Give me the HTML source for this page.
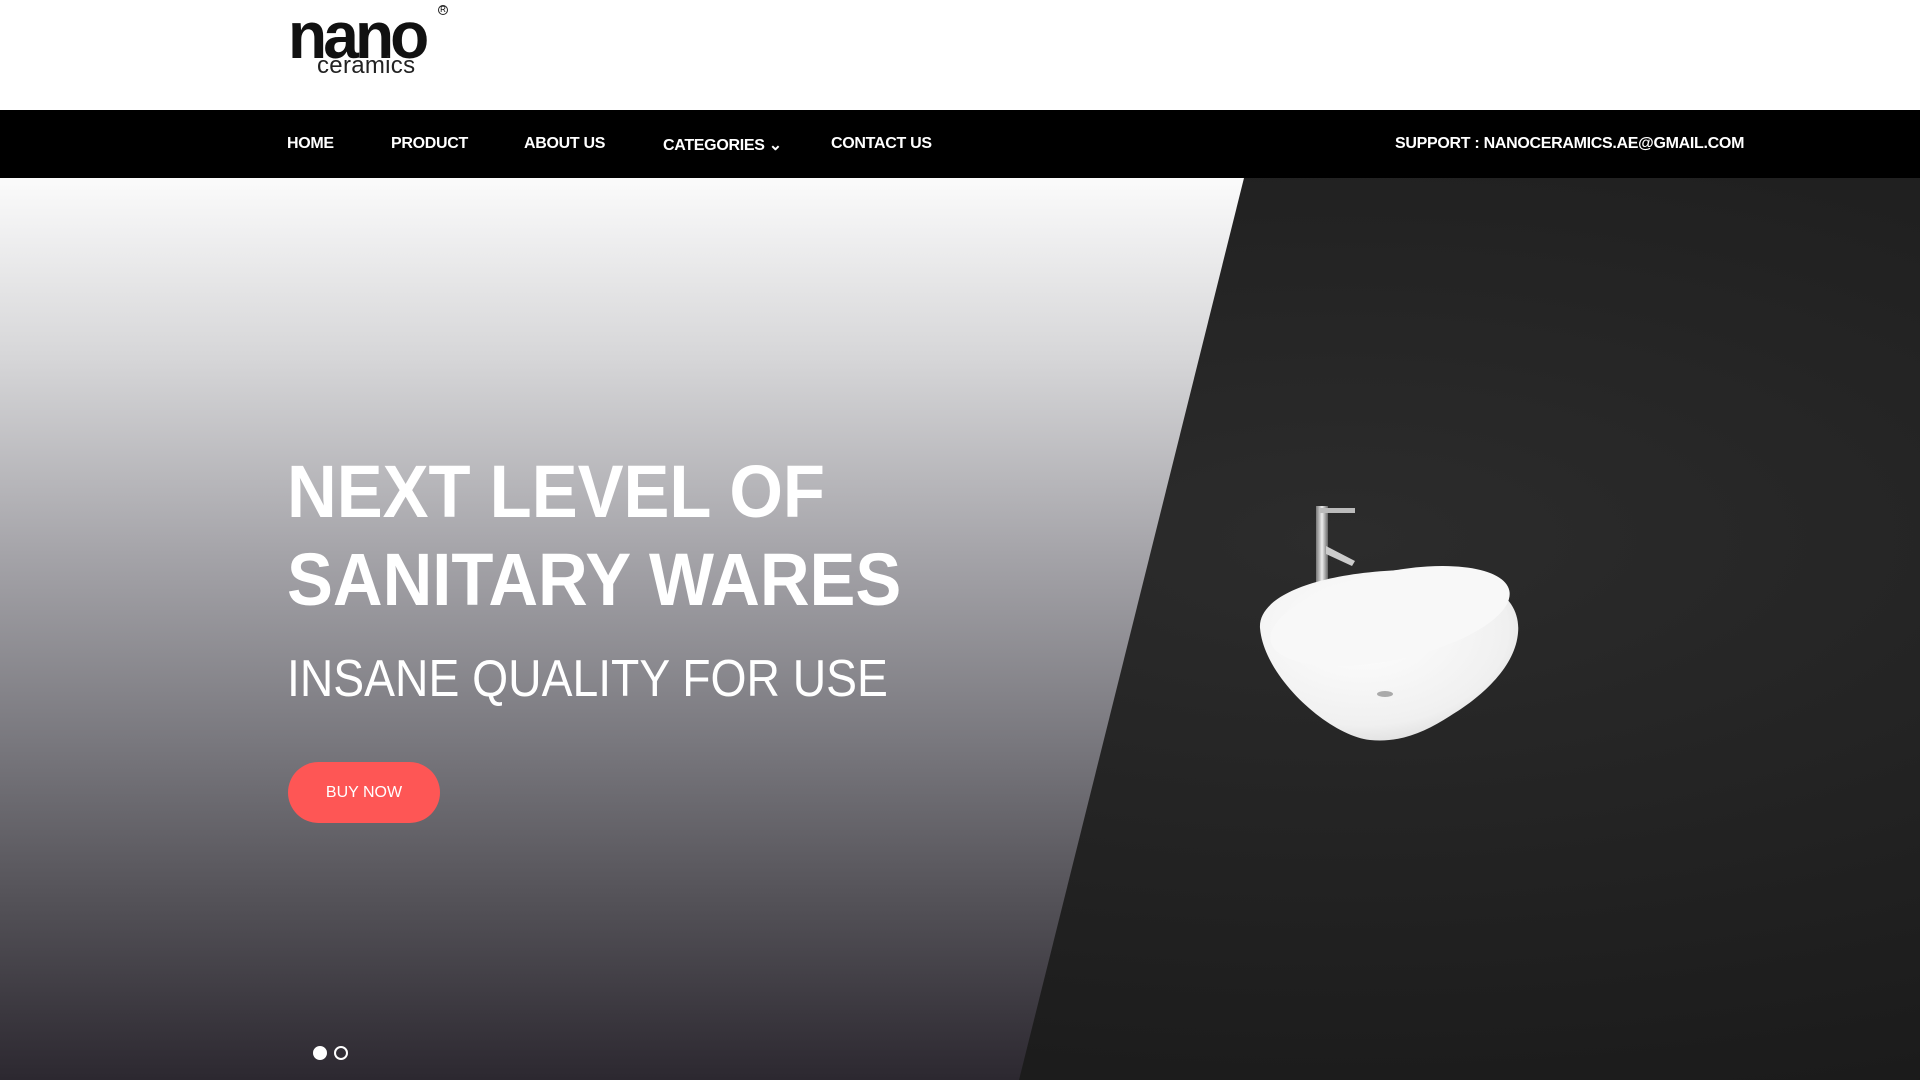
<!DOCTYPE html>
<html><head><meta charset="utf-8">
<style>
*{margin:0;padding:0;box-sizing:border-box}
body{width:1920px;height:1080px;overflow:hidden;font-family:"Liberation Sans",sans-serif;background:#fff;position:relative}
.top{height:110px;background:#fff;position:relative}
.logo{position:absolute;left:288px;top:2px}
.logo .n{font-size:66px;font-weight:bold;letter-spacing:-4px;color:#111;line-height:66px;display:block;transform:scaleX(0.97);transform-origin:left}
.logo .c{position:absolute;left:29px;top:50px;font-size:24px;color:#222;letter-spacing:0.3px}
.logo .r{position:absolute;left:150px;top:3px;font-size:8px;border:1px solid #222;border-radius:50%;width:10px;height:10px;line-height:8px;text-align:center}
nav{height:68px;background:#000;position:relative;color:#fff;font-weight:bold;font-size:16px}
nav span{position:absolute;top:25px;letter-spacing:-0.3px}
.hero{position:absolute;top:178px;left:0;width:1920px;height:902px;background:linear-gradient(180deg,#fbfbfb 0%,#d6d6d8 20%,#a4a3a8 42%,#7a797f 62%,#545258 80%,#2c2830 100%);overflow:hidden}
.dark{position:absolute;inset:0;background:radial-gradient(ellipse at 70% 40%,#2c2c2c,#1a1a1a 80%);clip-path:polygon(1244px 0,1920px 0,1920px 902px,1019px 902px)}
h1{position:absolute;left:287px;top:270px;color:#fff;font-size:74px;line-height:88px;font-weight:bold;transform:scaleX(0.93);transform-origin:left;white-space:nowrap}
h2{position:absolute;left:287px;top:471px;color:#fff;font-size:52px;font-weight:normal;transform:scaleX(0.89);transform-origin:left;white-space:nowrap}
.btn{position:absolute;left:288px;top:584px;width:152px;height:61px;border-radius:31px;background:#fe5655;color:#fff;font-size:16px;text-align:center;line-height:61px}
.dot{position:absolute;top:868px;width:14px;height:14px;border-radius:50%;border:2px solid #fff}
</style></head><body>
<div class="top"><div class="logo"><span class="n">nano</span><span class="c">ceramics</span><span class="r">R</span></div></div>
<nav>
<span style="left:287px">HOME</span>
<span style="left:391px">PRODUCT</span>
<span style="left:524px">ABOUT US</span>
<span style="left:663px">CATEGORIES &#8964;</span>
<span style="left:831px">CONTACT US</span>
<span style="left:1395px">SUPPORT : NANOCERAMICS.AE@GMAIL.COM</span>
</nav>
<div class="hero">
<div class="dark"></div>
<h1>NEXT LEVEL OF<br>SANITARY WARES</h1>
<h2>INSANE QUALITY FOR USE</h2>
<div class="btn">BUY NOW</div>
<div class="dot" style="left:313px;background:#fff"></div>
<div class="dot" style="left:334px"></div>
<svg style="position:absolute;left:1250px;top:320px" width="300" height="300" viewBox="0 0 300 300">
<defs><linearGradient id="m" x1="0" x2="1"><stop offset="0" stop-color="#777"/><stop offset=".5" stop-color="#eee"/><stop offset="1" stop-color="#666"/></linearGradient>
<radialGradient id="b" cx=".4" cy=".35" r=".8"><stop offset="0" stop-color="#fff"/><stop offset=".7" stop-color="#f0f0f0"/><stop offset="1" stop-color="#cfcfcf"/></radialGradient></defs>
<rect x="66" y="8" width="12" height="78" fill="url(#m)"/>
<rect x="70" y="10" width="35" height="5" fill="#bbb"/>
<path d="M76 48 L105 63 L102 68 L76 56 Z" fill="#ccc"/>
<path d="M10 130 C8 100 60 76 150 72 C230 70 272 96 268 135 C265 170 230 200 200 218 C175 234 150 245 120 242 C80 238 14 180 10 130 Z" fill="url(#b)"/>
<ellipse cx="140" cy="118" rx="122" ry="44" fill="#f8f8f8" transform="rotate(-12 140 118)"/>
<ellipse cx="135" cy="196" rx="8" ry="3" fill="#aaa"/>
</svg>
</div>
</body></html>
